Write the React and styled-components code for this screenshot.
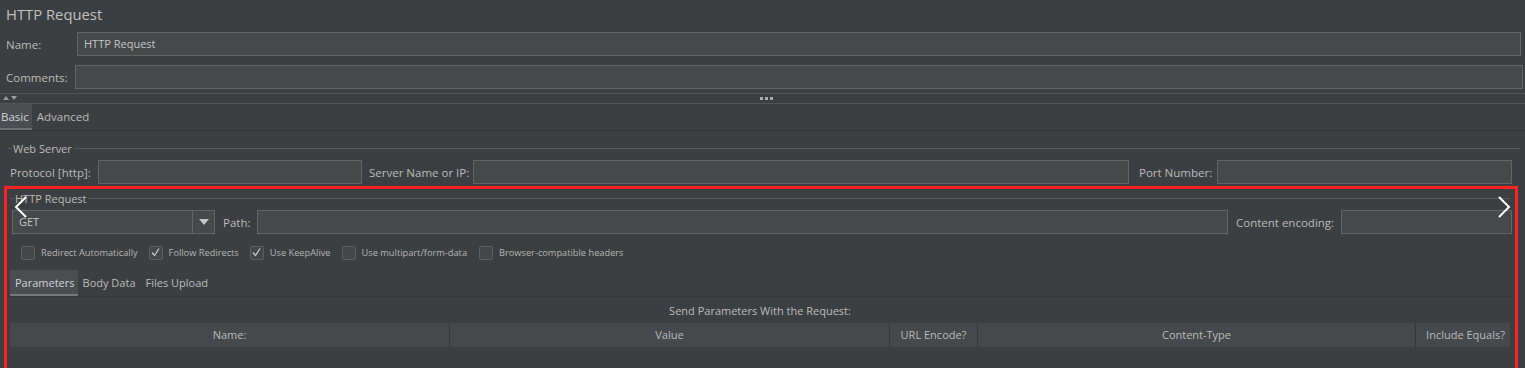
import React from 'react'
import styled, { createGlobalStyle } from 'styled-components'

const checks = [
  { label: 'Redirect Automatically', on: false, gap: 11 },
  { label: 'Follow Redirects', on: true, gap: 11 },
  { label: 'Use KeepAlive', on: true, gap: 11 },
  { label: 'Use multipart/form-data', on: false, gap: 12 },
  { label: 'Browser-compatible headers', on: false, gap: 0 },
]

const columns = [
  { label: 'Name:', width: 440 },
  { label: 'Value', width: 440 },
  { label: 'URL Encode?', width: 88 },
  { label: 'Content-Type', width: 438 },
  { label: 'Include Equals?', width: 99 },
]

const App = () => {
  return (
    <Page>
      <GlobalStyle />
      <Title>HTTP Request</Title>

      <FormRow $top={4}>
        <Label $width={71}>Name:</Label>
        <Input $mr={4}>HTTP Request</Input>
      </FormRow>
      <FormRow $top={9}>
        <Label $width={69}>Comments:</Label>
        <Input $mr={2} />
      </FormRow>

      <Splitter>
        <Arrows>
          <svg width="14" height="6" viewBox="0 0 14 6">
            <path d="M0 5 L3 1 L6 5 Z" fill="#9a9d9f" />
            <path d="M8 1 L14 1 L11 5 Z" fill="#9a9d9f" />
          </svg>
        </Arrows>
        <Grip>
          <span />
          <span />
          <span />
        </Grip>
      </Splitter>

      <TabBar>
        <Tab $active>Basic</Tab>
        <Tab>Advanced</Tab>
      </TabBar>

      <Fieldset $top={12} $left={8}>
        <LegendLine>
          <Dash />
          <LegendText>Web Server</LegendText>
          <Line />
        </LegendLine>
        <FieldRow $top={7}>
          <Label $width={88}>Protocol [http]:</Label>
          <Input $width={264} />
          <Label $width={111} $pl={7}>Server Name or IP:</Label>
          <Input $width={656} />
          <Label $width={88} $pl={10}>Port Number:</Label>
          <Input $width={295} />
        </FieldRow>
      </Fieldset>

      <Highlight>
        <Chevron $side="left">
          <svg width="14" height="24" viewBox="0 0 14 24">
            <path d="M12 2 L2 12 L12 22" fill="none" stroke="#fff" strokeWidth="2" />
          </svg>
        </Chevron>
        <Chevron $side="right">
          <svg width="14" height="24" viewBox="0 0 14 24">
            <path d="M2 2 L12 12 L2 22" fill="none" stroke="#fff" strokeWidth="2" />
          </svg>
        </Chevron>

        <Fieldset $top={4} $left={3}>
          <LegendLine>
            <Dash />
            <LegendText>HTTP Request</LegendText>
            <Line />
          </LegendLine>
          <FieldRow $top={7}>
            <Combo>
              <ComboText>GET</ComboText>
              <ComboButton>
                <svg width="10" height="6" viewBox="0 0 10 6">
                  <path d="M0 0 L10 0 L5 6 Z" fill="#c4c6c8" />
                </svg>
              </ComboButton>
            </Combo>
            <Label $width={42} $pl={8}>Path:</Label>
            <Input $width={971} />
            <Label $width={113} $pl={8}>Content encoding:</Label>
            <Input $width={171} />
          </FieldRow>
          <CheckRow>
            {checks.map((c) => (
              <CheckItem key={c.label} $gap={c.gap}>
                <Box>
                  {c.on && (
                    <svg width="11" height="11" viewBox="0 0 11 11">
                      <path d="M2 5.5 L4.5 8.5 L9 1.5" fill="none" stroke="#c8c8c8" strokeWidth="1.3" />
                    </svg>
                  )}
                </Box>
                <CheckLabel>{c.label}</CheckLabel>
              </CheckItem>
            ))}
          </CheckRow>

          <SubTabBar>
            <SubTab $active>Parameters</SubTab>
            <SubTab>Body Data</SubTab>
            <SubTab>Files Upload</SubTab>
          </SubTabBar>

          <Caption>Send Parameters With the Request:</Caption>
          <TableHead>
            {columns.map((col) => (
              <HeadCell key={col.label} $width={col.width}>
                {col.label}
              </HeadCell>
            ))}
          </TableHead>
        </Fieldset>
      </Highlight>
    </Page>
  )
}

const GlobalStyle = createGlobalStyle`
  html, body {
    margin: 0;
    padding: 0;
    background: #3c3f41;
  }
  * {
    box-sizing: border-box;
  }
`

const Page = styled.div`
  width: 1525px;
  height: 368px;
  overflow: hidden;
  background: #3c3f41;
  color: #bbbbbb;
  font-family: 'Open Sans', 'Noto Sans', sans-serif;
  font-size: 11px;
`

const Title = styled.div`
  height: 28px;
  padding-left: 6px;
  font-size: 14.8px;
  line-height: 28px;
  color: #c0c0c0;
`

const FormRow = styled.div`
  display: flex;
  align-items: center;
  height: 24px;
  margin-top: ${(p) => p.$top}px;
  padding-left: 6px;
`

const Label = styled.div`
  flex: none;
  width: ${(p) => p.$width}px;
  padding-left: ${(p) => p.$pl || 0}px;
  white-space: nowrap;
  font-size: 11.5px;
  color: #bbbbbb;
`

const Input = styled.div`
  flex: ${(p) => (p.$width ? 'none' : '1')};
  width: ${(p) => (p.$width ? `${p.$width}px` : 'auto')};
  height: 24px;
  margin-right: ${(p) => p.$mr || 0}px;
  background: #45494a;
  border: 1px solid #646464;
  padding-left: 6px;
  line-height: 22px;
  font-size: 11px;
  color: #c4c4c4;
`

const Splitter = styled.div`
  position: relative;
  height: 11px;
  margin-top: 4px;
  border-top: 1px solid #515456;
  border-bottom: 1px solid #515456;
  display: flex;
  align-items: center;
  justify-content: center;
`

const Arrows = styled.div`
  position: absolute;
  left: 3px;
  top: 1px;
  display: flex;
`

const Grip = styled.div`
  display: flex;
  gap: 2px;
  margin-left: 8px;

  span {
    width: 3px;
    height: 3px;
    background: #a9acae;
  }
`

const TabBar = styled.div`
  display: flex;
  height: 27px;
  border-bottom: 1px solid #323232;
`

const Tab = styled.div`
  padding: 0 ${(p) => (p.$active ? 3 : 4)}px 0 ${(p) => (p.$active ? 1 : 5)}px;
  line-height: 25px;
  font-size: 11.5px;
  color: ${(p) => (p.$active ? '#cfd3d6' : '#bbbbbb')};
  background: ${(p) => (p.$active ? '#4a4e51' : 'transparent')};
  border-bottom: 2px solid ${(p) => (p.$active ? '#6e7275' : 'transparent')};
`

const Fieldset = styled.div`
  margin-top: ${(p) => p.$top}px;
  margin-left: ${(p) => p.$left}px;
  margin-right: 5px;
`

const LegendLine = styled.div`
  display: flex;
  align-items: center;
  height: 10px;
`

const Dash = styled.div`
  width: 4px;
  height: 1px;
  background: #56595b;
`

const LegendText = styled.div`
  padding: 0 2px 0 1px;
  font-size: 11px;
  color: #bbbbbb;
`

const Line = styled.div`
  flex: 1;
  height: 1px;
  background: #56595b;
`

const FieldRow = styled.div`
  display: flex;
  align-items: center;
  margin-top: ${(p) => p.$top}px;
  padding-left: 2px;
`

const Highlight = styled.div`
  position: relative;
  margin: 2px 7px 0 4px;
  height: 200px;
  border: 3px solid #ff2222;
  border-bottom: none;
`

const Chevron = styled.div`
  position: absolute;
  top: 6px;
  ${(p) => (p.$side === 'left' ? 'left: 7px;' : 'right: 4px;')}
  z-index: 2;
`

const Combo = styled.div`
  display: flex;
  flex: none;
  width: 203px;
  height: 24px;
  background: #45494a;
  border: 1px solid #646464;
`

const ComboText = styled.div`
  flex: 1;
  padding-left: 6px;
  line-height: 22px;
  font-size: 11px;
  color: #c4c4c4;
`

const ComboButton = styled.div`
  width: 22px;
  border-left: 1px solid #646464;
  display: flex;
  align-items: center;
  justify-content: center;
`

const CheckRow = styled.div`
  display: flex;
  align-items: center;
  height: 15px;
  margin-top: 11px;
  padding-left: 11px;
`

const CheckItem = styled.div`
  display: flex;
  align-items: center;
  margin-right: ${(p) => p.$gap}px;
`

const Box = styled.div`
  width: 14px;
  height: 14px;
  border: 1px solid #5c5f61;
  border-radius: 2px;
  background: #43474a;
  display: flex;
  align-items: center;
  justify-content: center;
  margin-right: 6px;
`

const CheckLabel = styled.div`
  font-size: 9.25px;
  color: #b4b4b4;
  white-space: nowrap;
`

const SubTabBar = styled.div`
  display: flex;
  height: 27px;
  margin-top: 10px;
  border-bottom: 1px solid #353739;
`

const SubTab = styled.div`
  padding: 0 ${(p) => (p.$active ? 3 : 5)}px 0 5px;
  line-height: 25px;
  font-size: 11px;
  color: ${(p) => (p.$active ? '#cfd3d6' : '#bbbbbb')};
  background: ${(p) => (p.$active ? '#4a4e51' : 'transparent')};
  border-bottom: 2px solid ${(p) => (p.$active ? '#75797c' : 'transparent')};
`

const Caption = styled.div`
  height: 26px;
  line-height: 28px;
  text-align: center;
  font-size: 11px;
  color: #bbbbbb;
`

const TableHead = styled.div`
  display: flex;
  height: 24px;
  background: #45494b;
`

const HeadCell = styled.div`
  flex: none;
  width: ${(p) => p.$width}px;
  border-right: 1px solid #35383a;
  text-align: center;
  line-height: 24px;
  font-size: 11px;
  color: #bbbbbb;
  white-space: nowrap;
  overflow: hidden;

  &:last-child {
    border-right: none;
  }
`

export default App
